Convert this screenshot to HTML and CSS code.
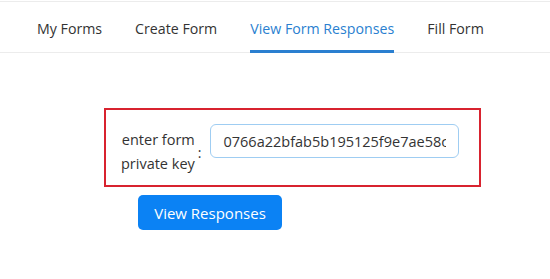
FILE: index.html
```html
<!DOCTYPE html>
<html lang="en">
<head>
    <meta charset="UTF-8">
    <meta name="viewport" content="width=device-width, initial-scale=1.0">
    <title>View Form Responses</title>
    <link rel="stylesheet" href="styles.css">
</head>
<body>
    <nav class="tabs">
        <a class="tab">My Forms</a>
        <a class="tab">Create Form</a>
        <a class="tab active">View Form Responses</a>
        <a class="tab">Fill Form</a>
    </nav>
    <div class="page">
        <div class="key-box">
            <label class="key-label" for="privateKey">enter form private key</label>
            <span class="colon">:</span>
            <input type="text" id="privateKey" class="key-input" value="0766a22bfab5b195125f9e7ae58c4d1f03a9">
        </div>
        <button class="view-btn">View Responses</button>
    </div>
</body>
</html>
```

FILE: styles.css
```css
body {
    margin: 0;
    font-family: "Open Sans", "Noto Sans", Arial, sans-serif;
    color: #333;
    background: #fff;
}
.tabs {
    display: flex;
    gap: 33px;
    padding: 0 0 0 37px;
    margin-top: 1px;
    border-top: 1px solid #ececec;
    border-bottom: 1px solid #ececec;
    height: 52px;
    box-sizing: border-box;
}
.tab {
    font-size: 14.2px;
    line-height: 20px;
    padding-top: 17px;
    margin-bottom: -1px;
    color: #333;
    border-bottom: 3px solid transparent;
    cursor: pointer;
}
.tab.active {
    color: #2a7fd0;
    border-bottom-color: #2a7fd0;
}
.page {
    padding: 55px 0 0 104px;
}
.key-box {
    display: flex;
    align-items: flex-start;
    width: 377px;
    box-sizing: border-box;
    border: 2px solid #d8232f;
    padding: 14px 20px 9px 0;
}
.key-label {
    width: 89px;
    padding-top: 4px;
    text-align: right;
    font-size: 14.5px;
    line-height: 24px;
}
.colon {
    font-size: 14px;
    line-height: 14px;
    margin: 22px 9px 0 3px;
}
.key-input {
    width: 249px;
    height: 34px;
    box-sizing: border-box;
    padding: 0 12px;
    border: 1px solid #9fcdf2;
    border-radius: 6px;
    font-family: inherit;
    font-size: 14.5px;
    color: #333;
    outline: none;
}
.view-btn {
    display: block;
    margin: 8px 0 0 34px;
    width: 144px;
    height: 35px;
    background: #0b82f4;
    color: #fff;
    border: none;
    border-radius: 5px;
    font-family: inherit;
    font-size: 15px;
    cursor: pointer;
}
```
